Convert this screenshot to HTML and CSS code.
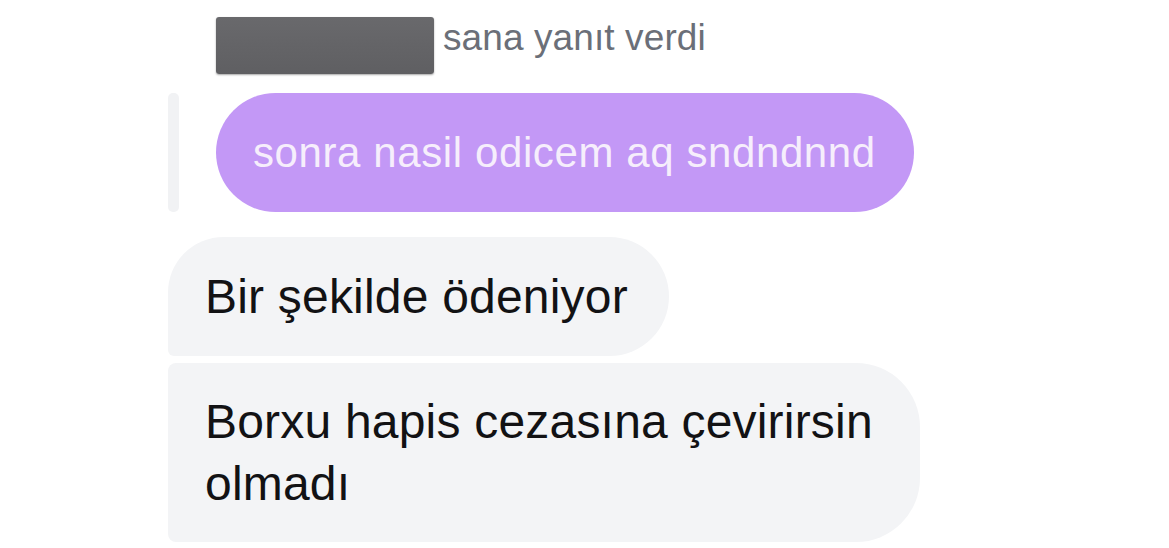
FILE: index.html
```html
<!DOCTYPE html>
<html lang="tr">
<head>
    <meta charset="UTF-8">
    <meta name="viewport" content="width=device-width, initial-scale=1.0">
    <title>Mesajlar</title>
    <link rel="stylesheet" href="styles.css">
</head>
<body>
    <div class="thread">
        <!-- Reply header -->
        <div class="reply-header">
            <span class="redacted"></span>
            <span class="reply-label">sana yanıt verdi</span>
        </div>

        <!-- Quoted message -->
        <div class="quoted">
            <span class="quote-bar"></span>
            <div class="bubble bubble-purple">sonra nasil odicem aq sndndnnd</div>
        </div>

        <!-- Incoming messages -->
        <div class="bubble bubble-gray first">Bir şekilde ödeniyor</div>
        <div class="bubble bubble-gray last">Borxu hapis cezasına çevirirsin<br>olmadı</div>
    </div>
</body>
</html>
```

FILE: styles.css
```css
/* Basic reset */
* {
    margin: 0;
    padding: 0;
    box-sizing: border-box;
}

body {
    font-family: 'Liberation Sans', Arial, sans-serif;
    background-color: #ffffff;
    width: 1169px;
    height: 548px;
    overflow: hidden;
}

.thread {
    display: flex;
    flex-direction: column;
    align-items: flex-start;
    padding: 17px 0 0 168px;
}

/* Reply header */
.reply-header {
    display: flex;
    align-items: flex-start;
    padding-left: 48px;
}

.redacted {
    width: 218px;
    height: 57px;
    background: linear-gradient(#69696c, #5f5f62);
    border-radius: 3px;
    box-shadow: 0 1px 2px rgba(0, 0, 0, 0.35);
}

.reply-label {
    margin-left: 9px;
    margin-top: 2px;
    font-size: 37px;
    line-height: 37px;
    letter-spacing: 0.1px;
    color: #6b6f78;
}

/* Quoted message */
.quoted {
    display: flex;
    gap: 37px;
    margin-top: 19px;
}

.quote-bar {
    width: 11px;
    height: 119px;
    background-color: #f1f2f4;
    border-radius: 5px;
}

.bubble-purple {
    height: 119px;
    display: flex;
    align-items: center;
    padding: 0 38px 0 37px;
    background-color: #c398f6;
    color: #f6eefc;
    font-size: 42px;
    letter-spacing: 0.6px;
    border-radius: 60px;
}

.bubble-gray {
    background-color: #f3f4f6;
    color: #121214;
    font-size: 48px;
    letter-spacing: 0.2px;
    padding: 0 37px;
}

.bubble-gray.first {
    margin-top: 25px;
    height: 119px;
    display: flex;
    align-items: center;
    padding-right: 41px;
    border-radius: 56px 60px 60px 6px;
}

.bubble-gray.last {
    margin-top: 7px;
    padding-top: 28px;
    padding-bottom: 27px;
    width: 752px;
    line-height: 62px;
    border-radius: 8px 64px 64px 8px;
}
```
